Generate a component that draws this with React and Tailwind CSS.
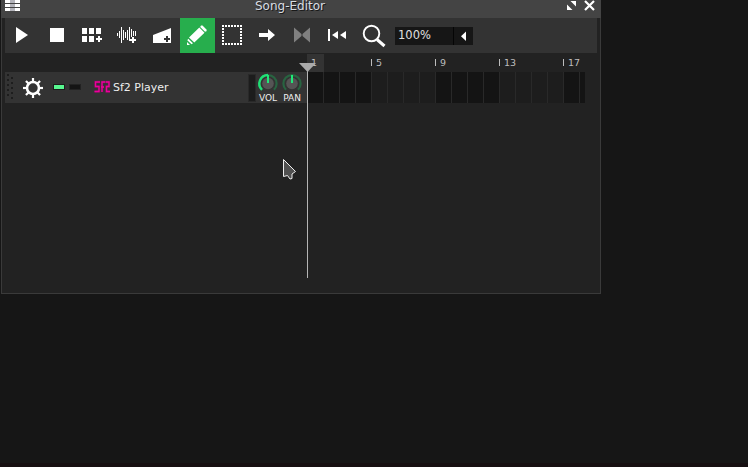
import React from "react";

function ToolButton({ x, active, label, children }) {
  return (
    <button aria-label={label} className={`h-[35px] w-[35px] shrink-0 ${active ? "bg-[#27ae4d]" : ""}`}>
      <svg width="35" height="35" viewBox={`${x} 18 35 35`} fill="#fff" className="block">
        {children}
      </svg>
    </button>
  );
}

const WAVE = [
  [117, 33, 36], [119, 31, 38], [121, 27, 43], [123, 30, 40], [125, 32, 38],
  [127, 30, 40], [129, 27, 41], [131, 29, 37], [133, 31, 36], [135, 31, 36],
];

function Toolbar() {
  return (
    <div className="ml-[3px] flex h-[35px] w-[592px] bg-[#333333]">
      <ToolButton x={5} label="Play">
        <path d="M16 27 L28 35 L16 43Z" />
      </ToolButton>
      <ToolButton x={40} label="Stop">
        <rect x="50" y="28" width="14" height="14" />
      </ToolButton>
      <ToolButton x={75} label="Add beat">
        <path d="M82 28h5v6h-5z M89 28h5v6h-5z M96 28h5v6h-5z M82 36h5v6h-5z M89 36h5v6h-5z M98 36h2v2h2v2h-2v2h-2v-2h-2v-2h2z" />
      </ToolButton>
      <ToolButton x={110} label="Add sample">
        {WAVE.map(([x, top, bottom]) => (
          <rect key={x} x={x} y={top} width="1" height={bottom - top} />
        ))}
        <path d="M132 37h2v2h2v2h-2v2h-2v-2h-2v-2h2z" />
      </ToolButton>
      <ToolButton x={145} label="Add automation">
        <path d="M153 35 L171 28 V43 H153Z" />
        <path d="M166 36h2v2h2v2h-2v2h-2v-2h-2v-2h2z" fill="#333" />
      </ToolButton>
      <ToolButton x={180} label="Draw" active>
        <path d="M199.300 27.500 L204.500 32.700 L194.300 42.500 L189 37.500Z M201 25.500 L202.500 25.500 L206.700 29.700 L206.500 31.300 L205 31.800 L200.200 27Z M188.300 38.700 L193 43.300 L191.500 44.300 L187.300 40.300Z M187 42 L190 45 L187 45Z" />
      </ToolButton>
      <ToolButton x={215} label="Select">
        <path d="M222 26H242M222 44H242" stroke="#fff" strokeWidth="2" strokeDasharray="2 1" fill="none" />
        <path d="M223 25V45M241 25V45" stroke="#fff" strokeWidth="2" strokeDasharray="2 1" fill="none" />
      </ToolButton>
      <ToolButton x={250} label="Continue">
        <path d="M259 33H268V29L275 35L268 41V37H259Z" />
      </ToolButton>
      <ToolButton x={285} label="Loop points">
        <path d="M294 27.500 L301.500 34 V36 L294 42.500Z M310 27.500 L302.500 34 V36 L310 42.500Z" fill="#808080" />
      </ToolButton>
      <ToolButton x={320} label="Rewind">
        <path d="M328 29h2v12h-2z M338 31 V39 L332 35Z M346 31 V39 L340 35Z" />
      </ToolButton>
      <svg width="35" height="35" viewBox="355 18 35 35" className="block shrink-0" fill="none" stroke="#fff">
        <circle cx="371.500" cy="33.500" r="7.800" strokeWidth="1.900" />
        <path d="M377 39.500 L384.500 46" strokeWidth="3" />
      </svg>
      <div className="ml-[5px] mt-[9px] flex h-[18px] w-[78px] bg-[#161616]">
        <span className="w-[58px] pl-[3px] text-[11.500px] leading-[17px] text-[#e0e0e0]">100%</span>
        <svg width="20" height="18" viewBox="453 27 20 18">
          <rect x="453" y="27" width="1" height="18" fill="#050505" />
          <path d="M466 31.500V41L461 36.250Z" fill="#fff" />
        </svg>
      </div>
    </div>
  );
}

function Ruler() {
  return (
    <div className="ml-[305px] flex h-[18px] text-[9.500px] leading-[17px] text-[#bdbdbd]">
      <div className="w-[17px] shrink-0 bg-[#333333] pl-[4px]">1</div>
      <div className="w-[47px] shrink-0" />
      {[5, 9, 13, 17].map((n) => (
        <div key={n} className={`flex shrink-0 ${n === 17 ? "w-[30px]" : "w-[64px]"}`}>
          <i className="mt-[5px] h-[7px] w-px bg-[#bdbdbd]" />
          <span className="pl-[4px]">{n}</span>
        </div>
      ))}
    </div>
  );
}

function Knob({ label, arc }) {
  return (
    <div className="flex w-[24px] flex-col items-center">
      <svg width="24" height="21" viewBox="0 0 24 21" className="block">
        <path d="M6 17.800 A8.600 8.600 0 1 1 18 17.800" fill="none" stroke="#286441" strokeWidth="2.200" />
        {arc && <path d="M6 17.800 A8.600 8.600 0 0 1 12 3" fill="none" stroke="#20df75" strokeWidth="2.400" />}
        <circle cx="12" cy="11.500" r="5.800" fill="#555" />
        <path d="M12 3V11" stroke="#20e878" strokeWidth="2" />
      </svg>
      <span className="text-[9px] leading-[10px] text-[#eee]">{label}</span>
    </div>
  );
}

const BARS = Array.from({ length: 18 }, (_, i) => i);
const SF2_STROKES = "M100 82H95.500V86.500H99V91.500H94.500M102 92V82H105M101 87H104M105.500 82H109V86.500H106.500V91.500H110";

function Track() {
  return (
    <div className="ml-[3px] flex h-[31px] w-[580px]">
      <div className="flex w-[302px] shrink-0 bg-[#333333]">
        <svg width="108" height="31" viewBox="5 72 108 31" className="block shrink-0">
          {[0, 1, 2, 3, 4].map((i) => (
            <React.Fragment key={i}>
              <rect x="7" y={74 + i * 5} width="2" height="2" fill="#1d1d1d" />
              <rect x="11" y={77 + i * 5} width="2" height="2" fill="#1d1d1d" />
            </React.Fragment>
          ))}
          <g stroke="#fff" fill="none">
            <circle cx="33" cy="88" r="6" strokeWidth="2.600" />
            {[0, 45, 90, 135, 180, 225, 270, 315].map((a) => (
              <path key={a} d="M33 82 V78" strokeWidth="2.200" transform={`rotate(${a} 33 88)`} />
            ))}
          </g>
          <rect x="53" y="84" width="12" height="6" fill="#1c1c1c" />
          <rect x="54" y="85" width="10" height="4" fill="#57f78f" />
          <rect x="69" y="84" width="12" height="6" fill="#222" />
          <rect x="70" y="85" width="10" height="4" fill="#141414" />
          <path d={SF2_STROKES} fill="none" stroke="#751457" strokeWidth="2.400" />
          <path d={SF2_STROKES} fill="none" stroke="#ed009b" strokeWidth="1.300" />
        </svg>
        <span className="w-[135px] shrink-0 text-[11px] leading-[31px] text-[#eee]">Sf2 Player</span>
        <div className="mt-[2px] h-[28px] w-[8px] shrink-0 border border-[#292929] bg-[#1c1c1c]" />
        <Knob label="VOL" arc />
        <Knob label="PAN" />
      </div>
      <div className="flex w-[278px] overflow-hidden">
        {BARS.map((i) => (
          <div
            key={i}
            className={`h-[31px] shrink-0 border-r border-[#292929] ${i === 0 ? "w-[17px]" : "w-[16px]"} ${i % 8 < 4 ? "bg-[#141414]" : "bg-[#1d1d1d]"}`}
          />
        ))}
      </div>
    </div>
  );
}

export default function App() {
  return (
    <div className="relative h-[467px] w-[748px] overflow-hidden bg-[#161616] font-['DejaVu_Sans',sans-serif]">
      <section className="ml-px h-[294px] w-[600px] border-x border-b border-[#3a3a3a] bg-[#222222]">
        <header className="-mx-px flex h-[18px] bg-[#444444]">
          <svg width="40" height="18" viewBox="1 0 40 18" className="block shrink-0">
            {[0, 4, 8].map((y) => (
              <React.Fragment key={y}>
                <rect x="5" y={y} width="15" height="3" fill="#fff" />
                <rect x="10" y={y} width="5" height="3" fill="#b4b4bb" />
              </React.Fragment>
            ))}
          </svg>
          <h1 className="grow pl-[214px] text-[12px] leading-[13px] text-[#d8dde2] [text-shadow:1px_1px_0_#181818]">Song-Editor</h1>
          <svg width="40" height="18" viewBox="561 0 40 18" className="block shrink-0">
            <path d="M570.500 1H576V6.500Z M567 4.500V10H572.500Z" fill="#fff" />
            <path d="M585 1L594 10M594 1L585 10" stroke="#fff" strokeWidth="2.200" />
          </svg>
        </header>
        <Toolbar />
        <div className="h-px" />
        <Ruler />
        <Track />
      </section>
      <svg className="absolute left-[299px] top-[62px]" width="18" height="217" viewBox="299 62 18 217">
        <rect x="307" y="71" width="1" height="207" fill="#b5b5b5" />
        <path d="M299 63H316L307.500 72Z" fill="#aaa" />
      </svg>
      <svg className="absolute left-[282px] top-[157px]" width="16" height="25" viewBox="282 157 16 25">
        <path d="M283.500 159.500V176.500L287.500 175.500L290 179L292 178.500V174L295.500 171.500Z" fill="#505050" stroke="#eee" />
      </svg>
      <div className="absolute bottom-0 h-[4px] w-full bg-[#160f11]" />
    </div>
  );
}
